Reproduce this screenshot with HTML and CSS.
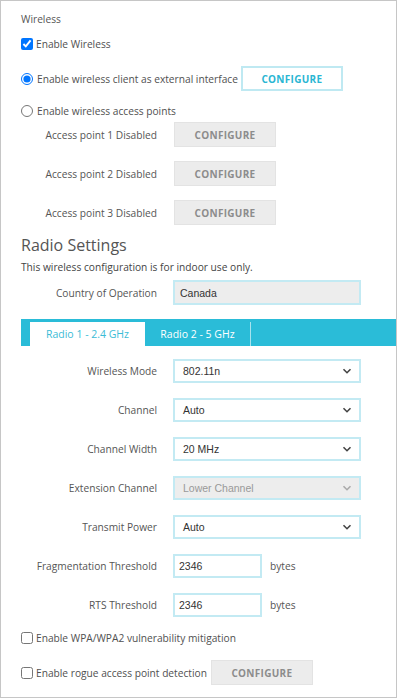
FILE: index.html
```html
<!DOCTYPE html>
<html>
<head>
<meta charset="utf-8">
<link rel="stylesheet" href="styles.css">
</head>
<body>
<div class="page">
  <div class="title">Wireless</div>
  <label class="check-row r-enable"><input type="checkbox" checked><span>Enable Wireless</span></label>
  <div class="radio-row r-client">
    <label class="opt"><input type="radio" name="mode" checked><span>Enable wireless client as external interface</span></label>
    <button class="btn btn-active">CONFIGURE</button>
  </div>
  <label class="opt r-ap"><input type="radio" name="mode"><span>Enable wireless access points</span></label>
  <div class="form-row r-ap1"><span class="lbl">Access point 1 Disabled</span><button class="btn btn-off">CONFIGURE</button></div>
  <div class="form-row r-gap"><span class="lbl">Access point 2 Disabled</span><button class="btn btn-off">CONFIGURE</button></div>
  <div class="form-row r-gap"><span class="lbl">Access point 3 Disabled</span><button class="btn btn-off">CONFIGURE</button></div>

  <div class="heading">Radio Settings</div>
  <div class="note">This wireless configuration is for indoor use only.</div>
  <div class="form-row r-country"><span class="lbl">Country of Operation</span><div class="field field-disabled wide country">Canada</div></div>

  <div class="tabs">
    <div class="tab tab-active">Radio 1 - 2.4 GHz</div>
    <div class="tab">Radio 2 - 5 GHz</div>
  </div>

  <div class="form-row r-first"><span class="lbl">Wireless Mode</span><div class="field wide select"><span>802.11n</span><svg class="chev" width="10" height="6" viewBox="0 0 10 6"><path d="M1.5 1.2l3.5 3.5 3.5-3.5" fill="none" stroke="#444" stroke-width="1.6"/></svg></div></div>
  <div class="form-row r-step"><span class="lbl">Channel</span><div class="field wide select"><span>Auto</span><svg class="chev" width="10" height="6" viewBox="0 0 10 6"><path d="M1.5 1.2l3.5 3.5 3.5-3.5" fill="none" stroke="#444" stroke-width="1.6"/></svg></div></div>
  <div class="form-row r-step"><span class="lbl">Channel Width</span><div class="field wide select"><span>20 MHz</span><svg class="chev" width="10" height="6" viewBox="0 0 10 6"><path d="M1.5 1.2l3.5 3.5 3.5-3.5" fill="none" stroke="#444" stroke-width="1.6"/></svg></div></div>
  <div class="form-row r-step"><span class="lbl">Extension Channel</span><div class="field wide select field-disabled muted"><span>Lower Channel</span><svg class="chev" width="10" height="6" viewBox="0 0 10 6"><path d="M1.5 1.2l3.5 3.5 3.5-3.5" fill="none" stroke="#aaa" stroke-width="1.6"/></svg></div></div>
  <div class="form-row r-step"><span class="lbl">Transmit Power</span><div class="field wide select"><span>Auto</span><svg class="chev" width="10" height="6" viewBox="0 0 10 6"><path d="M1.5 1.2l3.5 3.5 3.5-3.5" fill="none" stroke="#444" stroke-width="1.6"/></svg></div></div>
  <div class="form-row r-step"><span class="lbl">Fragmentation Threshold</span><div class="field short">2346</div><span class="unit">bytes</span></div>
  <div class="form-row r-step"><span class="lbl">RTS Threshold</span><div class="field short">2346</div><span class="unit">bytes</span></div>

  <label class="check-row r-wpa"><input type="checkbox"><span>Enable WPA/WPA2 vulnerability mitigation</span></label>
  <div class="radio-row r-rogue">
    <label class="check-row"><input type="checkbox"><span>Enable rogue access point detection</span></label>
    <button class="btn btn-off">CONFIGURE</button>
  </div>
</div>
</body>
</html>
```

FILE: styles.css
```css
* { box-sizing: border-box; }
html, body { margin: 0; padding: 0; background: #fff; }
body {
  font-family: "Open Sans", "Noto Sans", sans-serif;
  font-size: 10.2px;
  color: #505050;
}
.page {
  width: 397px;
  height: 698px;
  border: 1px solid #c6c6c6;
  padding: 10px 0 0 20px;
  overflow: hidden;
}
.title { line-height: 16px; color: #555; }
.check-row, .opt {
  display: flex;
  align-items: center;
  line-height: 16px;
  height: 16px;
}
.check-row input[type=checkbox] {
  width: 12px; height: 12px; margin: 0 3px 0 0;
}
.opt input[type=radio] {
  width: 12px; height: 12px; margin: 0 4px 0 0;
}
.r-enable { margin-top: 9px; }
.radio-row { display: flex; align-items: center; gap: 3px; }
.r-client { margin-top: 14px; height: 25px; }
.r-ap { margin-top: 12px; }
.btn {
  font-family: "Open Sans", "Noto Sans", sans-serif;
  font-weight: 700;
  font-size: 10px;
  letter-spacing: 0.3px;
  width: 102px;
  height: 25px;
  padding: 0;
  border-radius: 0;
}
.btn-active {
  background: #fff;
  color: #2ab6d3;
  border: 2px solid #bfe9f2;
}
.btn-off {
  background: #ececec;
  color: #8c8c8c;
  border: 1px solid #e3e3e3;
}
.form-row { display: flex; align-items: center; height: 25px; }
.lbl {
  width: 136px;
  text-align: right;
  margin-right: 16px;
  flex: none;
  color: #555;
}
.form-row .btn { margin-left: 1px; }
.r-ap1 { margin-top: 3px; }
.r-gap { margin-top: 14px; }
.heading {
  margin-top: 10px;
  font-size: 16px;
  line-height: 20px;
  color: #555;
}
.note { margin-top: 4px; line-height: 16px; color: #444; }
.r-country { margin-top: 5px; }
.field {
  height: 25px;
  border: 2px solid #c3eaf3;
  font-family: "Liberation Sans", Arial, sans-serif;
  font-size: 10.5px;
  color: #333;
  display: flex;
  align-items: center;
  padding: 0 8px;
  background: #fff;
}
.wide { width: 188px; }
.country { padding-left: 5px; }
.short { width: 89px; padding-left: 4px; }
.field-disabled { background: #ededed; }
.muted { color: #999; }
.select { justify-content: space-between; padding-right: 7px; height: 24px; }
.chev { display: block; }
.unit { margin-left: 8px; color: #555; }
.tabs {
  margin-top: 14px;
  height: 27px;
  background: #2abcd8;
  display: flex;
  padding: 3px 0 0 9px;
}
.tab {
  width: 106px;
  display: flex;
  align-items: center;
  justify-content: center;
  color: #fff;
  font-size: 10.5px;
  border-right: 1px solid #a7e3ee;
}
.tab-active {
  width: 115px;
  background: #fff;
  color: #3bbcd6;
  border-right: none;
}
.r-first { margin-top: 13px; height: 24px; }
.r-step { margin-top: 15px; height: 24px; }
.r-step .field { height: 24px; }
.r-wpa { margin-top: 13px; }
.r-rogue { margin-top: 14px; height: 25px; gap: 4px; }
```
